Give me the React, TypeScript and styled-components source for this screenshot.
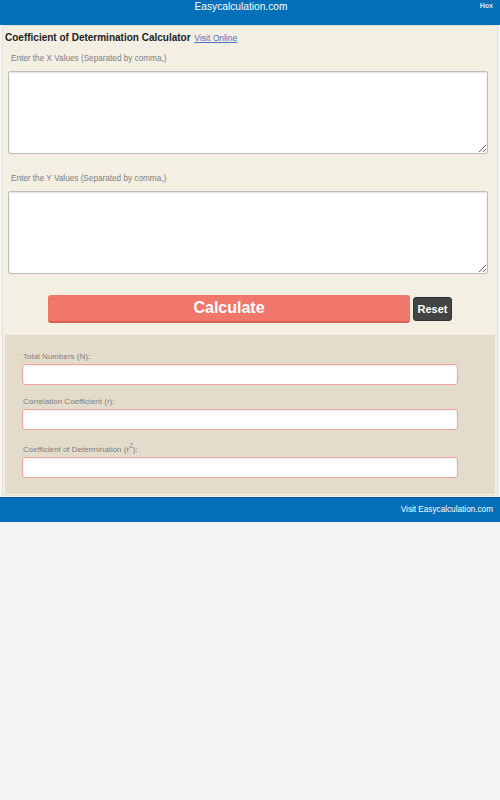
import React from 'react';
import styled, { createGlobalStyle } from 'styled-components';

const GlobalStyle = createGlobalStyle`
  html, body {
    margin: 0;
    padding: 0;
    background: #f3f2f4;
    font-family: "Liberation Sans", Arial, sans-serif;
  }
`;

const Page = styled.div`
  width: 500px;
`;

const Header = styled.header`
  position: relative;
  height: 25px;
  background: #0170b9;
  color: #fff;
  text-align: center;
  padding-right: 18px;
`;

const SiteTitle = styled.div`
  font-size: 10.2px;
  line-height: 13px;
`;

const Hox = styled.span`
  position: absolute;
  right: 7px;
  top: 2px;
  font-size: 7px;
  font-weight: bold;
  color: #d8e6f4;
`;

const Panel = styled.main`
  margin: 0 2px;
  background: #f3efe3;
  border: 1px solid #e6e0cf;
  border-radius: 4px 0 0 0;
  padding: 5px 2px 1px 2px;
`;

const Heading = styled.h1`
  margin: 0;
  font-size: 10px;
  line-height: 14px;
  font-weight: bold;
  color: #222;
`;

const VisitLink = styled.a`
  font-size: 8.5px;
  font-weight: normal;
  color: #4a6fc4;
  text-decoration: underline;
  margin-left: 1px;
`;

const Field = styled.div`
  padding: 0 7px 0 3px;
`;

const FieldLabel = styled.label`
  display: block;
  font-size: 8.2px;
  color: #808080;
  padding: 9px 0 8px 3px;
`;

const TextArea = styled.textarea`
  display: block;
  box-sizing: border-box;
  width: 100%;
  height: 83px;
  background: #fff;
  border: 1px solid #bdbdbd;
  border-radius: 2px;
  box-shadow: inset 0 1px 2px rgba(0, 0, 0, 0.12);
  resize: vertical;
  margin-bottom: 11px;
`;

const ButtonRow = styled.div`
  display: flex;
  align-items: center;
  gap: 3px;
  padding: 10px 0 12px 43px;
`;

const CalcButton = styled.button`
  width: 362px;
  height: 28px;
  background: #f2776b;
  border: none;
  border-bottom: 2px solid #d85f53;
  border-radius: 3px;
  color: #fff;
  font-family: "Liberation Sans", Arial, sans-serif;
  font-size: 16px;
  font-weight: bold;
  cursor: pointer;
`;

const ResetButton = styled.button`
  width: 39px;
  height: 24px;
  background: #444;
  border: 1px solid #333;
  border-radius: 3px;
  color: #fff;
  font-family: "Liberation Sans", Arial, sans-serif;
  font-size: 11px;
  font-weight: bold;
  padding: 0;
`;

const Results = styled.section`
  background: #e3dccb;
  padding: 17px 37px 16px 17px;
`;

const ResultLabel = styled.label`
  display: block;
  font-size: 8px;
  color: #808080;
  padding: 0 0 3px 1px;
`;

const ResultInput = styled.input`
  display: block;
  box-sizing: border-box;
  width: 436px;
  height: 21px;
  background: #fff;
  border: 1px solid #f0a3a3;
  border-radius: 3px;
  box-shadow: inset 0 1px 2px rgba(0, 0, 0, 0.08);
  margin-bottom: 12px;

  &:last-child {
    margin-bottom: 0;
  }
`;

const Footer = styled.footer`
  margin-top: 1px;
  height: 24px;
  background: #0170b9;
  border-top: 1px solid #1060a0;
  color: #fff;
  text-align: right;
`;

const FooterLink = styled.span`
  display: inline-block;
  font-size: 8.2px;
  padding: 1px 7px 0 0;
`;

export default function App() {
  return (
    <Page>
      <GlobalStyle />
      <Header>
        <SiteTitle>Easycalculation.com</SiteTitle>
        <Hox>Hox</Hox>
      </Header>
      <Panel>
        <Heading>
          Coefficient of Determination Calculator <VisitLink href="#">Visit Online</VisitLink>
        </Heading>
        <Field>
          <FieldLabel>Enter the X Values (Separated by comma,)</FieldLabel>
          <TextArea />
        </Field>
        <Field>
          <FieldLabel>Enter the Y Values (Separated by comma,)</FieldLabel>
          <TextArea />
        </Field>
        <ButtonRow>
          <CalcButton>Calculate</CalcButton>
          <ResetButton>Reset</ResetButton>
        </ButtonRow>
        <Results>
          <ResultLabel>Total Numbers (N):</ResultLabel>
          <ResultInput />
          <ResultLabel>Correlation Coefficient (r):</ResultLabel>
          <ResultInput />
          <ResultLabel>
            Coefficient of Determination (r<sup>2</sup>):
          </ResultLabel>
          <ResultInput />
        </Results>
      </Panel>
      <Footer>
        <FooterLink>Visit Easycalculation.com</FooterLink>
      </Footer>
    </Page>
  );
}
